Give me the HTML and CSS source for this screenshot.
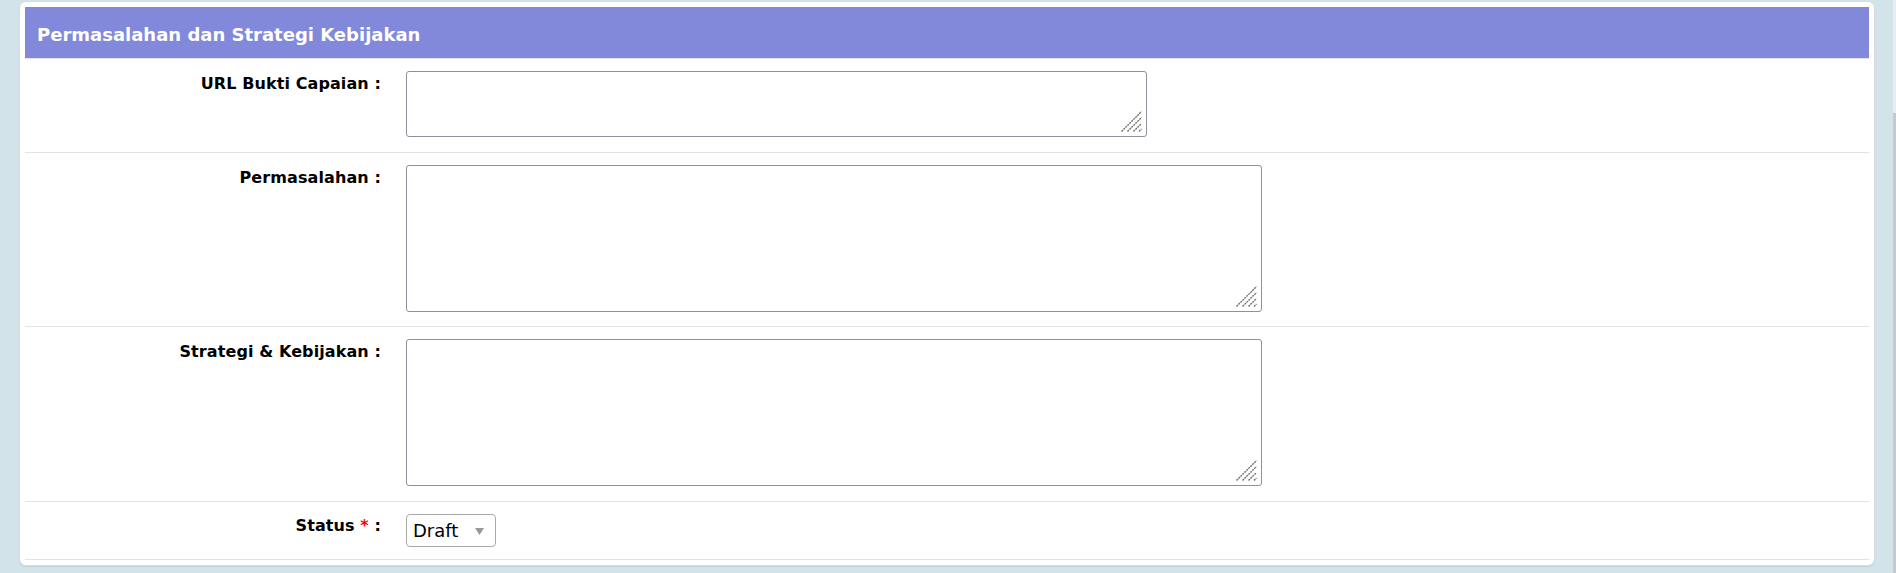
FILE: index.html
```html
<!DOCTYPE html>
<html>
<head>
<meta charset="utf-8">
<link rel="stylesheet" href="styles.css">
</head>
<body>
<div class="scrollbar"><div class="scrollbar-thumb"></div></div>
<div class="card">
  <div class="card-header">Permasalahan dan Strategi Kebijakan</div>
  <div class="form">
    <div class="row">
      <div class="label">URL Bukti Capaian :</div>
      <div class="field">
        <div class="ta-wrap ta-url">
          <textarea class="ta"></textarea>
          <svg class="grip" width="21" height="21" viewBox="0 0 21 21"><g stroke="#707070" stroke-width="1.4" stroke-dasharray="2 0.8"><line x1="0.5" y1="20.5" x2="20.5" y2="0.5"/><line x1="6.5" y1="20.5" x2="20.5" y2="6.5"/><line x1="12.5" y1="20.5" x2="20.5" y2="12.5"/><line x1="18" y1="20.5" x2="20.5" y2="18"/></g></svg>
        </div>
      </div>
    </div>
    <div class="row row-tight">
      <div class="label">Permasalahan :</div>
      <div class="field">
        <div class="ta-wrap ta-big">
          <textarea class="ta"></textarea>
          <svg class="grip" width="21" height="21" viewBox="0 0 21 21"><g stroke="#707070" stroke-width="1.4" stroke-dasharray="2 0.8"><line x1="0.5" y1="20.5" x2="20.5" y2="0.5"/><line x1="6.5" y1="20.5" x2="20.5" y2="6.5"/><line x1="12.5" y1="20.5" x2="20.5" y2="12.5"/><line x1="18" y1="20.5" x2="20.5" y2="18"/></g></svg>
        </div>
      </div>
    </div>
    <div class="row">
      <div class="label">Strategi &amp; Kebijakan :</div>
      <div class="field">
        <div class="ta-wrap ta-big">
          <textarea class="ta"></textarea>
          <svg class="grip" width="21" height="21" viewBox="0 0 21 21"><g stroke="#707070" stroke-width="1.4" stroke-dasharray="2 0.8"><line x1="0.5" y1="20.5" x2="20.5" y2="0.5"/><line x1="6.5" y1="20.5" x2="20.5" y2="6.5"/><line x1="12.5" y1="20.5" x2="20.5" y2="12.5"/><line x1="18" y1="20.5" x2="20.5" y2="18"/></g></svg>
        </div>
      </div>
    </div>
    <div class="row row-select">
      <div class="label label-select">Status <span class="req">*</span> :</div>
      <div class="field">
        <div class="select">
          <span class="select-value">Draft</span>
          <svg class="select-arrow" width="9" height="7" viewBox="0 0 9 7"><path d="M0 0 H9 L4.5 7 Z" fill="#999"/></svg>
        </div>
      </div>
    </div>
  </div>
</div>
</body>
</html>
```
FILE: styles.css
```css
html, body {
  margin: 0;
  padding: 0;
}
body {
  background: #d2e3ea;
  font-family: "DejaVu Sans", Verdana, sans-serif;
  height: 573px;
  overflow: hidden;
  position: relative;
}
.scrollbar {
  position: absolute;
  top: 0;
  right: 0;
  width: 3px;
  height: 573px;
  background: #e6eef1;
}
.scrollbar-thumb {
  margin-top: 113px;
  height: 460px;
  background: #c6c9cb;
}
.card {
  margin: 1px 0 0 19px;
  width: 1856px;
  box-sizing: border-box;
  background: #fff;
  border: 1px solid #d9dcde;
  border-radius: 7px;
  padding: 5px;
  box-shadow: 0 1px 1px rgba(0,0,0,0.08);
}
.card-header {
  height: 51px;
  box-sizing: border-box;
  background: #8289db;
  color: #fff;
  font-weight: bold;
  font-size: 18px;
  line-height: 21px;
  padding: 17px 0 0 12px;
}
.form {
  border-bottom: 1px solid #e2e3e6;
}
.row {
  display: flex;
  border-top: 1px solid #e2e3e6;
  padding: 12px 0 15px 0;
}
.row-tight {
  padding-bottom: 14px;
}
.row-select {
  padding-bottom: 12px;
}
.label {
  width: 356px;
  flex: none;
  text-align: right;
  font-weight: bold;
  font-size: 16px;
  letter-spacing: 0.1px;
  line-height: 18px;
  color: #000;
  padding-top: 4px;
}
.label-select {
  padding-top: 3px;
}
.req {
  color: #ff0000;
}
.field {
  margin-left: 25px;
}
.ta-wrap {
  position: relative;
}
.ta-url {
  width: 741px;
  height: 66px;
}
.ta-big {
  width: 856px;
  height: 147px;
}
.ta {
  display: block;
  width: 100%;
  height: 100%;
  box-sizing: border-box;
  border: 1px solid #8f8f9d;
  border-radius: 3px;
  resize: none;
  margin: 0;
  padding: 2px;
  background: #fff;
  font-family: "DejaVu Sans", sans-serif;
}
.grip {
  position: absolute;
  right: 5px;
  bottom: 5px;
}
.select {
  width: 90px;
  height: 33px;
  box-sizing: border-box;
  border: 1px solid #aaa;
  border-radius: 4px;
  display: flex;
  align-items: center;
  padding-left: 6px;
  font-size: 18px;
  line-height: 31px;
  color: #000;
  background: #fff;
}
.select-value {
  flex: 1;
}
.select-arrow {
  margin-right: 11px;
  margin-top: 2px;
}
```
